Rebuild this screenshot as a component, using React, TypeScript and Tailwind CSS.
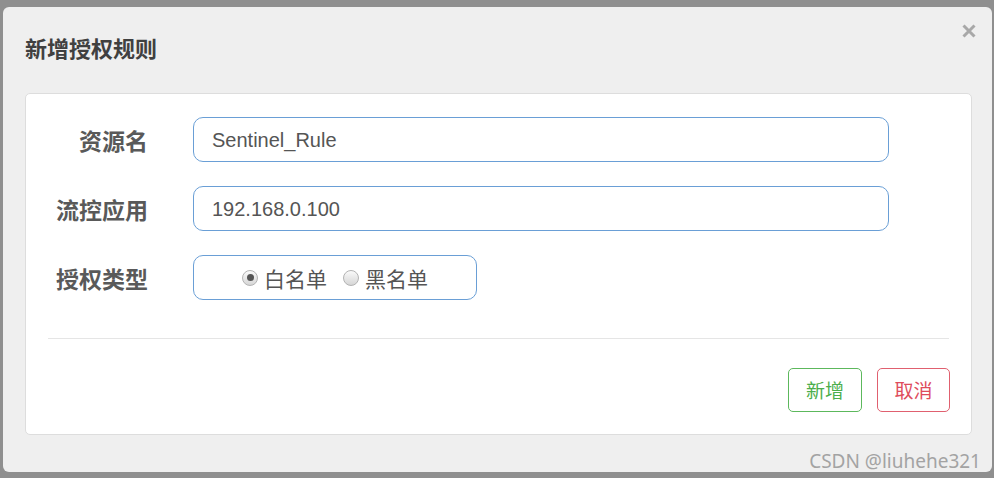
import React from "react";

const FONT = { fontFamily: '"Liberation Sans", "Noto Sans CJK SC", sans-serif' };
const CJK = { fontFamily: '"Noto Sans CJK SC", "Liberation Sans", sans-serif' };

function Radio({ checked, label }: { checked: boolean; label: string }) {
  return (
    <label className="flex items-center gap-[6px]">
      <span className="w-[16px] h-[16px] rounded-full border border-[#b3b3b3] bg-gradient-to-b from-[#fafafa] to-[#d6d6d6] flex items-center justify-center">
        {checked && <span className="w-[7px] h-[7px] rounded-full bg-[#555]" />}
      </span>
      <span className="text-[21px] leading-[28px] text-[#555]" style={CJK}>
        {label}
      </span>
    </label>
  );
}

function Row({ label, children }: { label: string; children: React.ReactNode }) {
  return (
    <div className="flex items-center h-[45px]">
      <div
        className="w-[122px] text-right text-[23px] leading-[30px] font-bold text-[#595959]"
        style={CJK}
      >
        {label}
      </div>
      <div className="ml-[45px]">{children}</div>
    </div>
  );
}

export default function App() {
  return (
    <div
      className="w-[994px] h-[478px] bg-[#8f8f8f] pt-[7px] pl-[3px] pr-[2px] pb-[6px] overflow-hidden"
      style={FONT}
    >
      <div className="w-full h-full bg-[#efefef] rounded-[6px] flex flex-col">
        <div className="h-[86px] shrink-0 relative pl-[22px] pt-[26px]">
          <div className="text-[22px] leading-[28px] font-bold text-[#404040]" style={CJK}>
            新增授权规则
          </div>
          <svg
            className="absolute right-[16px] top-[17px]"
            width="14"
            height="14"
            viewBox="0 0 14 14"
          >
            <path d="M1.5 1.5 L12.5 12.5 M12.5 1.5 L1.5 12.5" stroke="#a8a8a8" strokeWidth="3" />
          </svg>
        </div>
        <div className="ml-[22px] mr-[20px] h-[342px] shrink-0 bg-white rounded-[5px] border border-[#dddddd] flex flex-col pt-[23px]">
          <div className="flex flex-col gap-[24px]">
            <Row label="资源名">
              <div className="w-[696px] h-[45px] rounded-[10px] border border-[#6a9fd6] flex items-center pl-[18px] text-[20px] text-[#555]">
                Sentinel_Rule
              </div>
            </Row>
            <Row label="流控应用">
              <div className="w-[696px] h-[45px] rounded-[10px] border border-[#6a9fd6] flex items-center pl-[18px] text-[20px] text-[#555]">
                192.168.0.100
              </div>
            </Row>
            <Row label="授权类型">
              <div className="w-[284px] h-[45px] rounded-[10px] border border-[#6a9fd6] flex items-center justify-center gap-[16px]">
                <Radio checked label="白名单" />
                <Radio checked={false} label="黑名单" />
              </div>
            </Row>
          </div>
          <div className="mx-[22px] mt-[38px] h-px bg-[#e5e5e5]" />
          <div className="flex justify-end gap-[15px] pr-[21px] mt-[29px]">
            <button
              className="w-[74px] h-[44px] rounded-[5px] border border-[#5cb85c] text-[#4cae4c] text-[19px] bg-white"
              style={CJK}
            >
              新增
            </button>
            <button
              className="w-[73px] h-[44px] rounded-[5px] border border-[#e0606f] text-[#de4c5c] text-[19px] bg-white"
              style={CJK}
            >
              取消
            </button>
          </div>
        </div>
        <div className="flex-1 flex items-start justify-end pr-[11px] pt-[12px]">
          <span
            className="text-[19px] leading-[28px] text-[#a3a3a3]"
            style={{ fontFamily: '"Noto Sans", sans-serif' }}
          >
            CSDN @liuhehe321
          </span>
        </div>
      </div>
    </div>
  );
}
